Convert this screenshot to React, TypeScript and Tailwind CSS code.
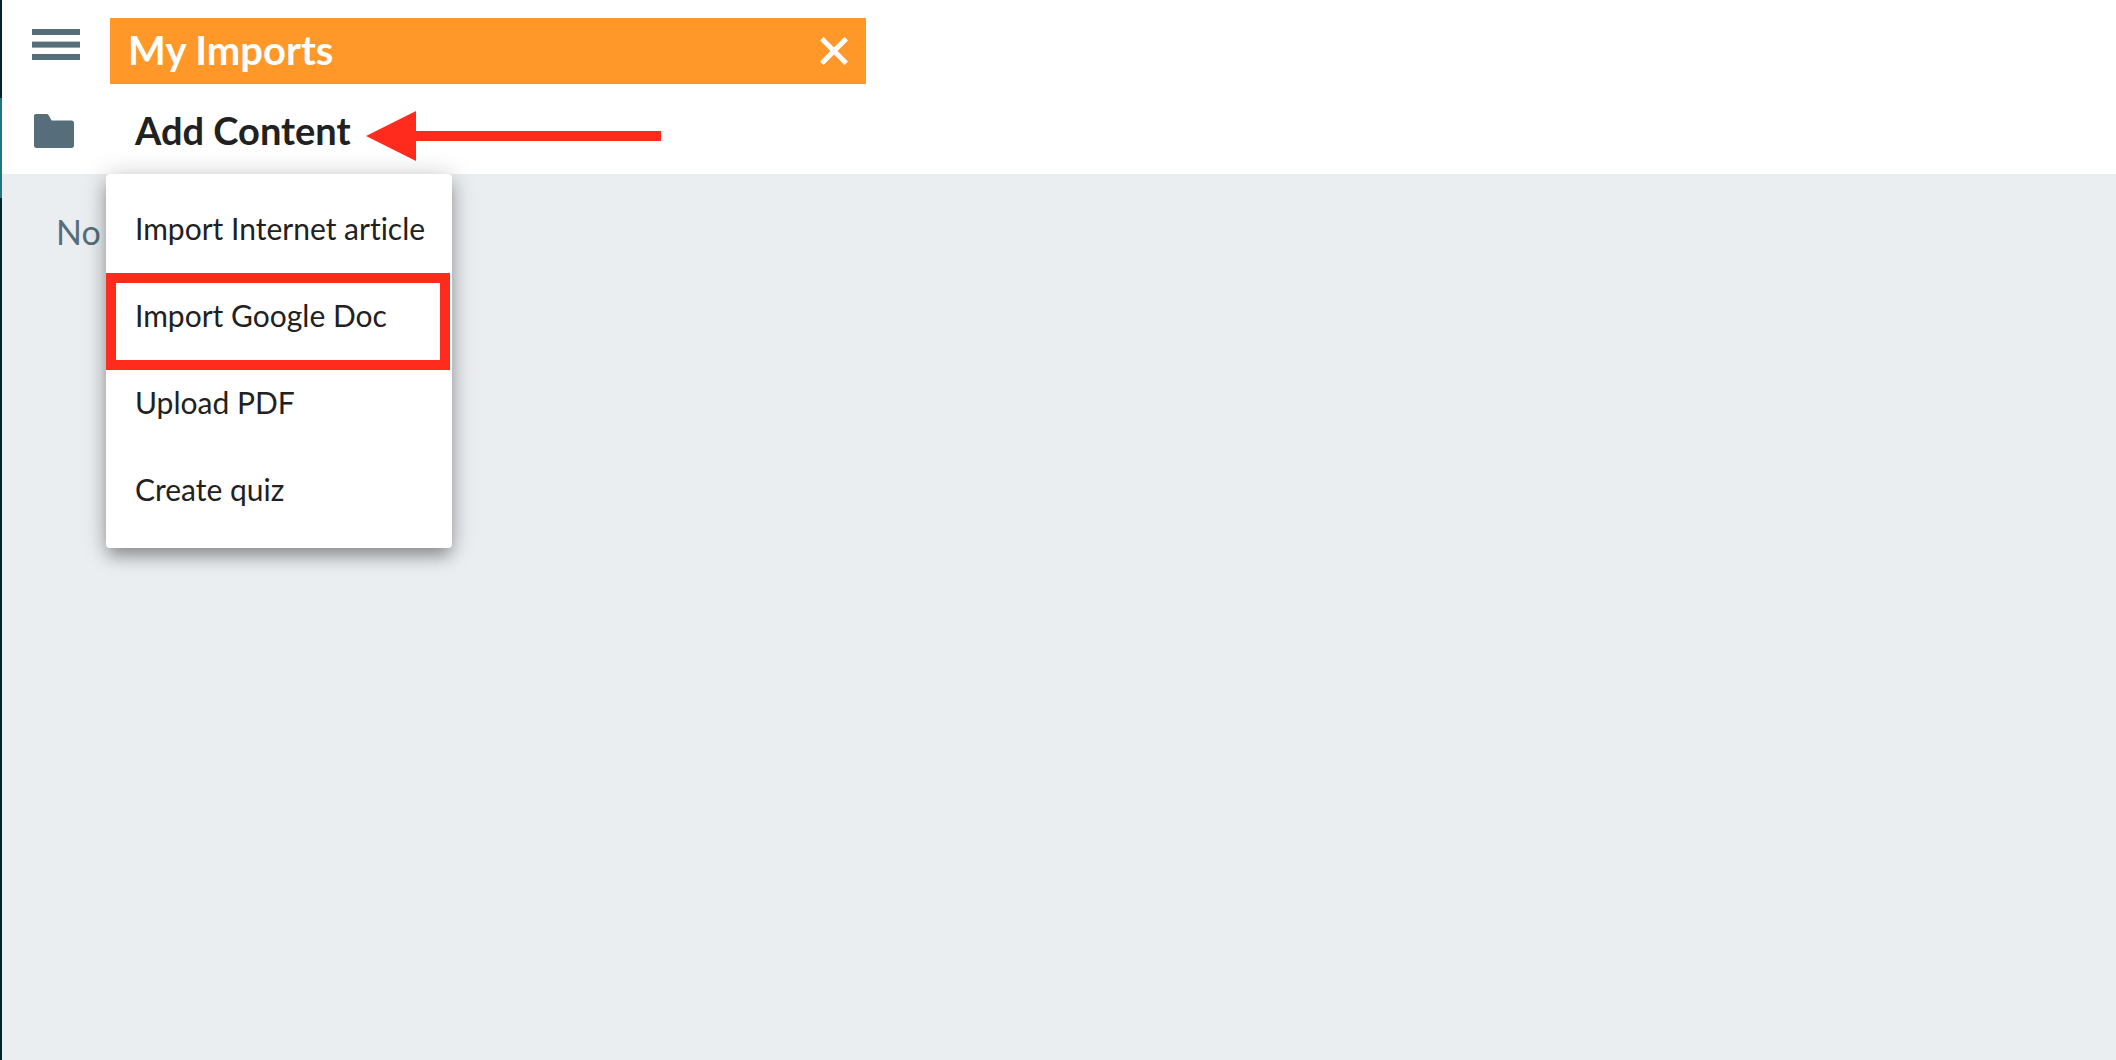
import { useState } from 'react'

const menuItems = [
  { label: 'Import Internet article' },
  { label: 'Import Google Doc', highlighted: true },
  { label: 'Upload PDF' },
  { label: 'Create quiz' },
]

function MenuIcon() {
  return (
    <svg viewBox="0 0 48 32" className="w-12 h-8" fill="currentColor" aria-hidden="true">
      <rect x="0" y="0" width="48" height="6" />
      <rect x="0" y="12.6" width="48" height="6" />
      <rect x="0" y="25" width="48" height="6" />
    </svg>
  )
}

function FolderIcon() {
  return (
    <svg viewBox="0 0 40 34" className="w-10 h-[34px]" fill="currentColor" aria-hidden="true">
      <path d="M2 0H12.5C13.6 0 14.3 .6 14.9 1.5L17.6 6.4H37.5C39 6.4 40 7.4 40 8.9V31.5C40 33 39 34 37.5 34H2.5C1 34 0 33 0 31.5V2C0 .8 .8 0 2 0Z" />
    </svg>
  )
}

function CloseIcon() {
  return (
    <svg viewBox="0 0 28 28" className="w-7 h-7" fill="none" stroke="currentColor" strokeWidth="5" aria-hidden="true">
      <path d="M1.8 1.8L26.2 26.2M26.2 1.8L1.8 26.2" />
    </svg>
  )
}

function ArrowLeft() {
  return (
    <svg viewBox="0 0 295 50" className="w-[295px] h-[50px]" fill="#ff2b1d" aria-hidden="true">
      <path d="M0 25L50 0V20H295V30H50V50Z" />
    </svg>
  )
}

export default function App() {
  const [folderOpen, setFolderOpen] = useState(true)
  const [menuOpen, setMenuOpen] = useState(true)

  return (
    <div className="flex min-h-screen font-['Lato',sans-serif] text-[#212121] [font-variant-ligatures:none]">
      {/* Edge of the collapsed sidebar */}
      <div className="flex flex-col w-0.5 shrink-0 bg-[#02222e]">
        <div className="h-[98px]" />
        <div className="h-[100px] bg-[#1f7485]" />
      </div>

      <div className="flex flex-col flex-1 min-w-0">
        <header className="h-[174px] shrink-0 bg-white pt-[18px] pl-[30px]">
          <div className="flex items-start">
            <button aria-label="Menu" className="mt-[11px] mr-[30px] text-[#566e7a]">
              <MenuIcon />
            </button>
            {folderOpen && (
              <div className="flex items-center justify-between flex-1 max-w-[756px] h-[66px] px-[18px] bg-[#ff9829] text-white">
                <h1 className="pb-0.5 text-[40px] leading-[48px] font-bold">My Imports</h1>
                <button aria-label="Close" onClick={() => setFolderOpen(false)}>
                  <CloseIcon />
                </button>
              </div>
            )}
          </div>

          <div className="flex items-center h-[90px] pt-1 pl-0.5">
            <button aria-label="Folder" className="mr-[61px] text-[#566e7a]">
              <FolderIcon />
            </button>

            <div className="relative">
              <button
                aria-haspopup="menu"
                aria-expanded={menuOpen}
                onClick={() => setMenuOpen(open => !open)}
                className="block pb-0.5 text-[38px] leading-[84px] font-bold whitespace-nowrap"
              >
                Add Content
              </button>
              {menuOpen && (
                <ul
                  role="menu"
                  className="absolute top-full left-[-29px] z-10 w-[346px] pt-3 pb-3.5 rounded bg-white shadow-[0_10px_16px_-2px_rgba(0,0,0,0.3),0_2px_26px_rgba(0,0,0,0.22)]"
                >
                  {menuItems.map(item => (
                    <li key={item.label} role="none" className="relative">
                      <button role="menuitem" className="block w-full h-[87px] px-[29px] pb-1 text-left text-[30px] leading-9 whitespace-nowrap">
                        {item.label}
                      </button>
                      {item.highlighted && (
                        <div className="absolute top-0 left-0 right-0.5 h-[97px] border-10 border-[#ff2b1d] pointer-events-none" />
                      )}
                    </li>
                  ))}
                </ul>
              )}
              <div className="absolute top-[23px] left-[231px]">
                <ArrowLeft />
              </div>
            </div>
          </div>
        </header>

        <main className="flex-1 bg-[#eaeef1] px-[54px] py-[34px]">
          <p className="text-[34px] leading-[48px] text-[#566e7a]">No</p>
        </main>
      </div>
    </div>
  )
}
